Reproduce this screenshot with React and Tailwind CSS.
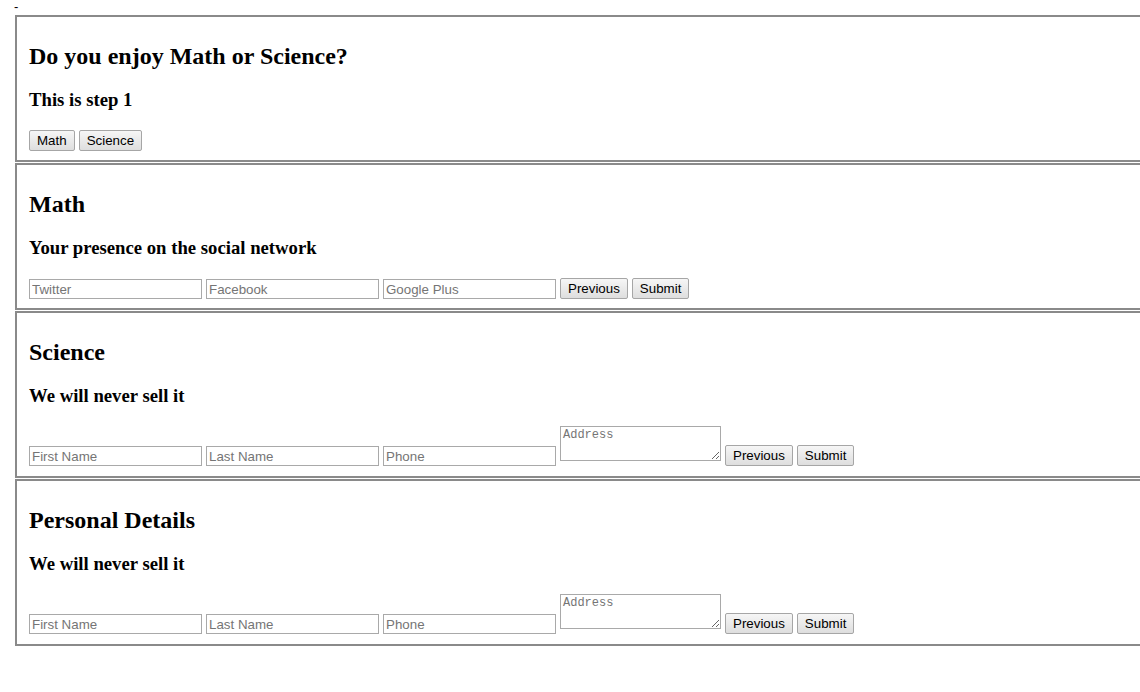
import React from "react";

const inputCls =
  "w-[173px] h-[20px] border border-[#a9a9a9] bg-white px-[2px] text-[13.33px] leading-[18px] text-black placeholder:text-[#757575] outline-none";
const btnCls =
  "h-[21px] border border-[#a6a6a6] rounded-[2px] bg-gradient-to-b from-[#f6f6f6] to-[#dedede] px-[7px] text-[13.33px] leading-[19px] text-black";

function Fieldset({ title, subtitle, children, pb }) {
  return (
    <div className={"ml-[15px] w-[1170px] border-2 border-[#8a8a8a] pl-[12px] pt-[25px] mb-px " + (pb ? "pb-[10px]" : "pb-[9px]")}>
      <h2 className="text-[24px] leading-[28px] font-bold text-black" style={{ fontFamily: '"Liberation Serif", serif' }}>
        {title}
      </h2>
      <h3 className="mt-[19px] text-[18.72px] leading-[22px] font-bold text-black" style={{ fontFamily: '"Liberation Serif", serif' }}>
        {subtitle}
      </h3>
      <div className="mt-[19px] flex items-end gap-[4px]">{children}</div>
    </div>
  );
}

function Btn({ children }) {
  return (
    <button type="button" className={btnCls}>
      {children}
    </button>
  );
}

function AddressRow() {
  return (
    <>
      <input className={inputCls} placeholder="First Name" />
      <input className={inputCls} placeholder="Last Name" />
      <input className={inputCls} placeholder="Phone" />
      <textarea
        className="mb-[5px] w-[161px] h-[35px] border border-[#a9a9a9] px-[2px] py-[1px] text-[12px] leading-[15px] placeholder:text-[#757575] outline-none"
        style={{ fontFamily: '"Liberation Mono", monospace' }}
        placeholder="Address"
      />
      <Btn>Previous</Btn>
      <Btn>Submit</Btn>
    </>
  );
}

export default function App() {
  return (
    <div className="w-full overflow-hidden bg-white" style={{ fontFamily: '"Liberation Sans", Arial, sans-serif' }}>
      <div className="h-[15px] pl-[14px] text-[13px] leading-[13px] text-black">-</div>
      <Fieldset title="Do you enjoy Math or Science?" subtitle="This is step 1">
        <Btn>Math</Btn>
        <Btn>Science</Btn>
      </Fieldset>
      <Fieldset title="Math" subtitle="Your presence on the social network">
        <input className={inputCls} placeholder="Twitter" />
        <input className={inputCls} placeholder="Facebook" />
        <input className={inputCls} placeholder="Google Plus" />
        <Btn>Previous</Btn>
        <Btn>Submit</Btn>
      </Fieldset>
      <Fieldset title="Science" subtitle="We will never sell it" pb>
        <AddressRow />
      </Fieldset>
      <Fieldset title="Personal Details" subtitle="We will never sell it" pb>
        <AddressRow />
      </Fieldset>
    </div>
  );
}
